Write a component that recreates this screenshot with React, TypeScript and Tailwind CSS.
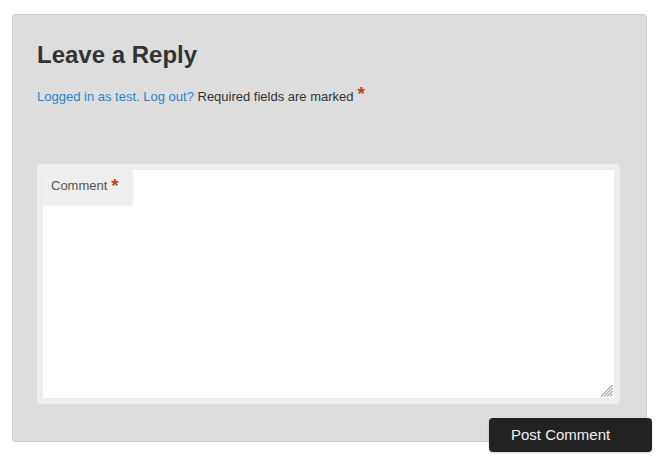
import React from 'react'

const Asterisk = () => (
  <span className="ml-[4px] align-[1px] text-[19px] font-bold leading-[0] text-[#c8420d]">*</span>
)

// resize grip drawn in the textarea's corner
const Grip = () => (
  <svg
    className="pointer-events-none absolute bottom-[7px] right-[7px]"
    width="14"
    height="13"
    viewBox="0 0 14 13"
  >
    <g stroke="#6f6f6f" strokeWidth="1">
      <line x1="13.5" y1="1" x2="2" y2="12.5" />
      <line x1="13.5" y1="4" x2="5" y2="12.5" />
      <line x1="13.5" y1="7" x2="8" y2="12.5" />
      <line x1="13.5" y1="10" x2="11" y2="12.5" />
    </g>
  </svg>
)

const App: React.FC = () => {
  return (
    <div className="flex min-h-[464px] flex-col bg-white pb-[12px] pl-[12px] pr-[8px] pt-[14px] font-['Liberation_Sans',Arial,sans-serif]">
      {/* Reply panel */}
      <div className="flex h-[428px] w-[635px] flex-col rounded-[3px] border border-[#cfcfcf] bg-[#dddddd] pl-[24px] pt-[26px]">
        <h3 className="text-[24px] font-bold leading-[28px] text-[#333333]">Leave a Reply</h3>
        <p className="mt-[18px] h-[20px] text-[13px] leading-[20px] text-[#333333]">
          <a href="#" className="text-[#1e86d2]">Logged in as test.</a>{' '}
          <a href="#" className="text-[#1e86d2]">Log out?</a> Required fields are marked
          <Asterisk />
        </p>

        {/* Comment field */}
        <div className="relative mt-[57px] w-[583px] rounded-[4px] bg-[#eeeeee] p-[6px]">
          <label
            htmlFor="comment"
            className="absolute left-[5px] top-[6px] flex h-[34px] w-[89px] items-center bg-[#eeeeee] pb-[2px] pl-[9px] text-[13px] text-[#555555] shadow-[1px_1px_3px_rgba(0,0,0,0.12)]"
          >
            Comment
            <Asterisk />
          </label>
          <textarea
            id="comment"
            className="block h-[228px] w-full resize-none bg-white outline-none"
          />
          <Grip />
        </div>
      </div>

      <div className="-mt-[24px] flex justify-end">
        <button className="h-[34px] w-[163px] rounded-[4px] bg-[#222222] pl-[22px] pt-[1px] text-left text-[15px] text-[#f2f2f2] shadow-[0_1px_2px_rgba(0,0,0,0.2)]">
          Post Comment
        </button>
      </div>
    </div>
  )
}

export default App
